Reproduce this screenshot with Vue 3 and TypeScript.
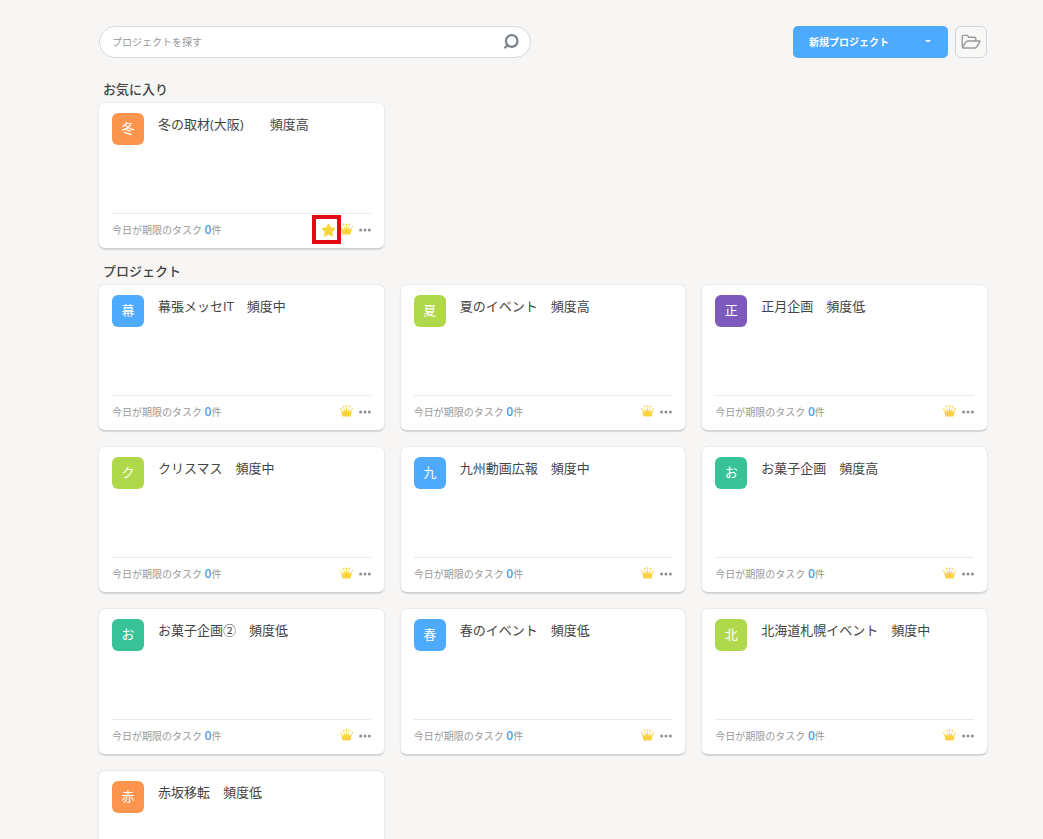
<script setup lang="ts">
import { ref } from 'vue'

interface Project {
  name: string
  color: string
  starred?: boolean
}

const blue = '#4daafd'
const green = '#afd94b'
const teal = '#37c297'
const orange = '#fd954f'
const purple = '#7d5bbd'

const query = ref('')

const sections: { title: string; projects: Project[] }[] = [
  {
    title: 'お気に入り',
    projects: [{ name: '冬の取材(大阪)　　頻度高', color: orange, starred: true }],
  },
  {
    title: 'プロジェクト',
    projects: [
      { name: '幕張メッセIT　頻度中', color: blue },
      { name: '夏のイベント　頻度高', color: green },
      { name: '正月企画　頻度低', color: purple },
      { name: 'クリスマス　頻度中', color: green },
      { name: '九州動画広報　頻度中', color: blue },
      { name: 'お菓子企画　頻度高', color: teal },
      { name: 'お菓子企画②　頻度低', color: teal },
      { name: '春のイベント　頻度低', color: blue },
      { name: '北海道札幌イベント　頻度中', color: green },
      { name: '赤坂移転　頻度低', color: orange },
    ],
  },
]
</script>

<template>
  <main class="page">
    <header class="toolbar">
      <form class="search" role="search" @submit.prevent>
        <input v-model="query" type="text" aria-label="プロジェクトを探す" placeholder="プロジェクトを探す" />
        <button type="submit" class="plain" aria-label="検索">
          <svg width="16" height="16" viewBox="0 0 16 16" fill="none" stroke="#7b828a" stroke-width="2.2">
            <circle cx="8.7" cy="7" r="5.8" />
            <path d="M4.8 11L1.4 14.2" />
          </svg>
        </button>
      </form>
      <div class="actions">
        <button type="button" class="create">
          <span>新規プロジェクト</span>
          <svg width="6" height="3" viewBox="0 0 6 3"><path d="M0 0h6L4 2H2z" fill="#fff" /></svg>
        </button>
        <button type="button" class="folder" aria-label="フォルダ">
          <svg width="20" height="16" viewBox="0 0 20 16" fill="none" stroke="#999" stroke-width="1.4" stroke-linejoin="round">
            <path d="M1.2 12.6V3Q1.2 1.4 2.7 1.4H6Q7.3 1.4 7.3 2.7V3.3H13.3Q14.8 3.3 14.8 4.8V7" />
            <path d="M1.5 13.3L4.8 8.2Q5.5 7 6.8 7H18.3Q19.3 7 18.7 8L15.6 12.8Q14.9 14 13.5 14H2.2Q1 14 1.5 13.3Z" />
          </svg>
        </button>
      </div>
    </header>

    <section v-for="section in sections" :key="section.title">
      <h2>{{ section.title }}</h2>
      <div class="grid">
        <article v-for="project in section.projects" :key="project.name" class="card">
          <div class="head">
            <span class="badge" :style="{ backgroundColor: project.color }">{{ project.name.charAt(0) }}</span>
            <h3>{{ project.name }}</h3>
          </div>
          <footer>
            <p>今日が期限のタスク <b>0</b>件</p>
            <div class="icons">
              <button v-if="project.starred" type="button" class="plain star" aria-label="お気に入り">
                <svg width="15" height="14" viewBox="0 0 15 14">
                  <path
                    d="M7.5 1.2L9.3 5L13.6 5.5L10.5 8.4L11.3 12.8L7.5 10.8L3.7 12.8L4.5 8.4L1.4 5.5L5.7 5Z"
                    fill="#f9d33c"
                    stroke="#f9d33c"
                    stroke-width="1.4"
                    stroke-linejoin="round"
                  />
                </svg>
              </button>
              <svg class="crown" width="13" height="12" viewBox="0 0 13 12" fill="#fad141" role="img" aria-label="管理者">
                <path d="M2 9L.6 4.2L3.6 7.2L3.7 2.4L5.4 6.8L6.5 2L7.6 6.8L9.3 2.4L9.4 7.2L12.4 4.2L11 9Q11 11.5 10 11.5H3Q2 11.5 2 9Z" />
                <circle cx="0.8" cy="3.8" r="0.8" />
                <circle cx="3.6" cy="1.6" r="0.9" />
                <circle cx="6.5" cy="1.2" r="0.9" />
                <circle cx="9.4" cy="1.6" r="0.9" />
                <circle cx="12.2" cy="3.8" r="0.8" />
              </svg>
              <button type="button" class="plain" aria-label="メニュー">
                <svg width="12" height="4" viewBox="0 0 12 4" fill="#8f8f8f">
                  <circle cx="1.6" cy="2" r="1.5" />
                  <circle cx="6" cy="2" r="1.5" />
                  <circle cx="10.4" cy="2" r="1.5" />
                </svg>
              </button>
            </div>
          </footer>
        </article>
      </div>
    </section>
  </main>
</template>

<style>
html,
body {
  background: #f7f6f5;
}
</style>

<style scoped>
.page {
  box-sizing: border-box;
  padding: 26px 55px 16px 98px;
  font-family: "Open Sans", "Noto Sans CJK JP", sans-serif;
  color: #444;
}

svg {
  display: block;
  flex: none;
}

button,
input {
  font: inherit;
  color: inherit;
}

button {
  padding: 0;
  cursor: pointer;
}

.plain {
  border: 0;
  background: none;
}

.toolbar {
  display: flex;
  justify-content: space-between;
  gap: 24px;
  padding: 0 1px;
  margin-bottom: 21px;
}

.search {
  box-sizing: border-box;
  display: flex;
  align-items: center;
  flex: 0 1 432px;
  height: 32px;
  padding: 0 11px 0 12px;
  border: 1px solid #d9d9d9;
  border-radius: 16px;
  background: #fff;
}

.search input {
  flex: 1;
  min-width: 0;
  padding: 0;
  border: 0;
  outline: 0;
  background: none;
  font-size: 10px;
}

.search input::placeholder {
  color: #999;
  opacity: 1;
}

.actions {
  display: flex;
  gap: 7px;
}

.create {
  display: flex;
  align-items: center;
  justify-content: space-between;
  width: 155px;
  height: 32px;
  padding: 0 17px 2px 16px;
  border: 0;
  border-radius: 5px;
  background: #4daafd;
  color: #fff;
  font-size: 10px;
  font-weight: 700;
}

.folder {
  display: grid;
  place-items: center;
  width: 32px;
  height: 32px;
  border: 1px solid #d5d5d5;
  border-radius: 6px;
  background: #f9f8f7;
}

h2 {
  margin: 0;
  padding: 0 5px 3px;
  font-size: 13px;
  line-height: 20px;
  font-weight: 500;
}

section + section {
  margin-top: 12px;
}

.grid {
  display: grid;
  grid-template-columns: repeat(3, minmax(0, 1fr));
  gap: 15px;
}

.card {
  box-sizing: border-box;
  display: flex;
  flex-direction: column;
  justify-content: space-between;
  min-height: 147px;
  padding: 10px 13px 0;
  border: 1px solid #ebebeb;
  border-bottom-color: #d2d2d2;
  border-radius: 7px;
  background: #fff;
  box-shadow: 0 1px 1px #d8d8d8;
}

.head {
  display: flex;
  gap: 14px;
}

.badge {
  box-sizing: border-box;
  flex: none;
  width: 32px;
  height: 32px;
  padding-top: 5px;
  border-radius: 6px;
  color: #fff;
  font-size: 13px;
  line-height: 20px;
  text-align: center;
}

h3 {
  margin: 0;
  padding-top: 1px;
  font-size: 13px;
  line-height: 20px;
  font-weight: 400;
}

footer {
  display: flex;
  align-items: center;
  justify-content: space-between;
  height: 32px;
  padding-bottom: 2px;
  border-top: 1px solid #e9e9e9;
}

p {
  margin: 0;
  font-size: 10px;
  line-height: 20px;
  color: #999;
}

b {
  font-size: 12px;
  font-weight: 600;
  color: #4d9fe6;
}

.icons {
  display: flex;
  align-items: center;
  gap: 6px;
}

.crown {
  margin-bottom: 2px;
}

.star {
  position: relative;
}

.star::after {
  content: "";
  position: absolute;
  inset: -8px -5px -7px -9px;
  border: 4px solid #e60b12;
}

.star + .crown {
  margin-left: -2px;
}
</style>
